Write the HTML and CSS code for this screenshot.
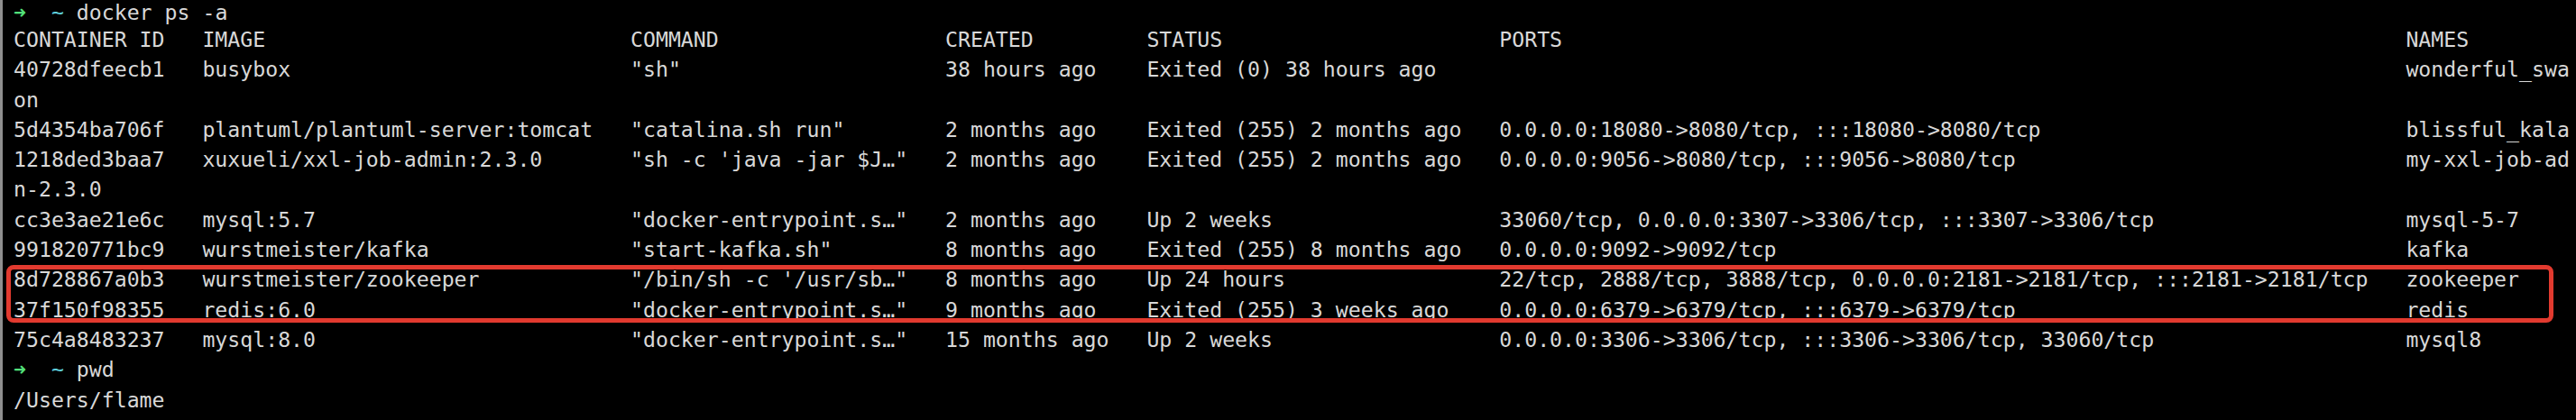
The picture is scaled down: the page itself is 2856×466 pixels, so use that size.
FILE: index.html
```html
<!DOCTYPE html>
<html>
<head>
<meta charset="utf-8">
<link rel="stylesheet" href="styles.css">
</head>
<body>
<div class="term">
  <div class="line first"><span class="arrow">➜</span>  <span class="tilde">~</span> docker ps -a</div>
  <div class="row"><span>CONTAINER ID</span><span>IMAGE</span><span>COMMAND</span><span>CREATED</span><span>STATUS</span><span>PORTS</span><span>NAMES</span></div>
  <div class="row"><span>40728dfeecb1</span><span>busybox</span><span>"sh"</span><span>38 hours ago</span><span>Exited (0) 38 hours ago</span><span></span><span>wonderful_swa</span></div>
  <div class="line">on</div>
  <div class="row"><span>5d4354ba706f</span><span>plantuml/plantuml-server:tomcat</span><span>"catalina.sh run"</span><span>2 months ago</span><span>Exited (255) 2 months ago</span><span>0.0.0.0:18080-&gt;8080/tcp, :::18080-&gt;8080/tcp</span><span>blissful_kala</span></div>
  <div class="row"><span>1218ded3baa7</span><span>xuxueli/xxl-job-admin:2.3.0</span><span>"sh -c 'java -jar $J…"</span><span>2 months ago</span><span>Exited (255) 2 months ago</span><span>0.0.0.0:9056-&gt;8080/tcp, :::9056-&gt;8080/tcp</span><span>my-xxl-job-ad</span></div>
  <div class="line">n-2.3.0</div>
  <div class="row"><span>cc3e3ae21e6c</span><span>mysql:5.7</span><span>"docker-entrypoint.s…"</span><span>2 months ago</span><span>Up 2 weeks</span><span>33060/tcp, 0.0.0.0:3307-&gt;3306/tcp, :::3307-&gt;3306/tcp</span><span>mysql-5-7</span></div>
  <div class="row"><span>991820771bc9</span><span>wurstmeister/kafka</span><span>"start-kafka.sh"</span><span>8 months ago</span><span>Exited (255) 8 months ago</span><span>0.0.0.0:9092-&gt;9092/tcp</span><span>kafka</span></div>
  <div class="row"><span>8d728867a0b3</span><span>wurstmeister/zookeeper</span><span>"/bin/sh -c '/usr/sb…"</span><span>8 months ago</span><span>Up 24 hours</span><span>22/tcp, 2888/tcp, 3888/tcp, 0.0.0.0:2181-&gt;2181/tcp, :::2181-&gt;2181/tcp</span><span>zookeeper</span></div>
  <div class="row"><span>37f150f98355</span><span>redis:6.0</span><span>"docker-entrypoint.s…"</span><span>9 months ago</span><span>Exited (255) 3 weeks ago</span><span>0.0.0.0:6379-&gt;6379/tcp, :::6379-&gt;6379/tcp</span><span>redis</span></div>
  <div class="row"><span>75c4a8483237</span><span>mysql:8.0</span><span>"docker-entrypoint.s…"</span><span>15 months ago</span><span>Up 2 weeks</span><span>0.0.0.0:3306-&gt;3306/tcp, :::3306-&gt;3306/tcp, 33060/tcp</span><span>mysql8</span></div>
  <div class="line"><span class="arrow">➜</span>  <span class="tilde">~</span> pwd</div>
  <div class="line">/Users/flame</div>
  <div class="highlight"></div>
</div>
</body>
</html>
```
FILE: styles.css
```css
html, body {
  margin: 0;
  padding: 0;
  background: #000;
  width: 2856px;
  height: 466px;
  overflow: hidden;
}

.term {
  position: relative;
  box-sizing: border-box;
  width: 2856px;
  height: 466px;
  border-left: 3px solid #8f8f8f;
  padding: 0 0 0 12px;
  background: #000;
  color: #d8d8d8;
  font-family: "DejaVu Sans Mono", "Liberation Mono", monospace;
  font-size: 23.2px;
  line-height: 33.3px;
  overflow: hidden;
}

.line {
  white-space: pre;
}

.line.first {
  line-height: 27px;
}

.row {
  display: grid;
  grid-template-columns: 15ch 34ch 25ch 16ch 28ch 72ch max-content;
  white-space: pre;
}

.arrow {
  color: #52e07a;
}

.tilde {
  color: #5fd1dc;
}

.highlight {
  position: absolute;
  left: 4px;
  top: 294px;
  width: 2824px;
  height: 64px;
  box-sizing: border-box;
  border: 5px solid #e23a2f;
  border-radius: 8px;
}
```
